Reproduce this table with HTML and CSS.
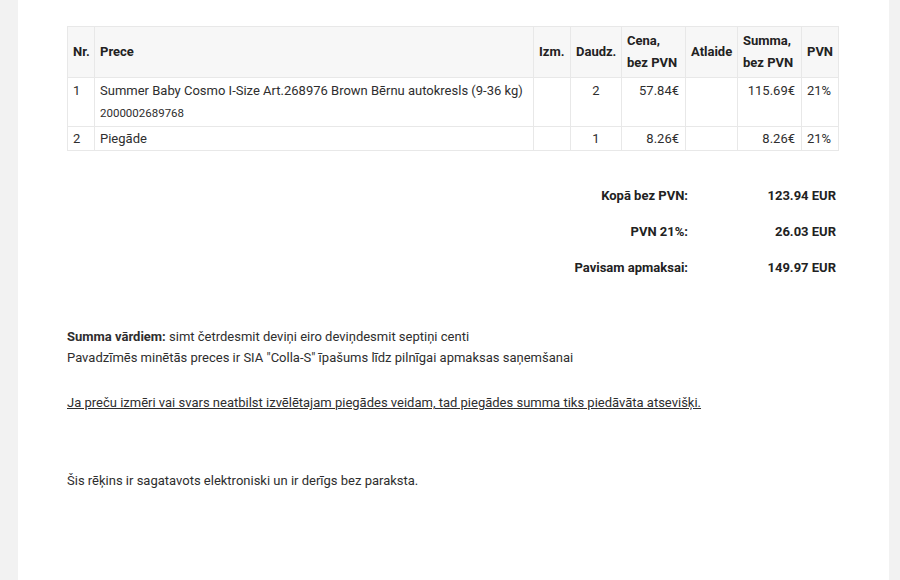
FILE: index.html
```html
<!DOCTYPE html>
<html lang="lv">
<head>
<meta charset="utf-8">
<title>Rēķins</title>
<link rel="stylesheet" href="styles.css">
</head>
<body>
<div class="page">
  <table class="items">
    <colgroup>
      <col class="c-nr"><col class="c-prece"><col class="c-izm"><col class="c-daudz"><col class="c-cena"><col class="c-atl"><col class="c-summa"><col class="c-pvn">
    </colgroup>
    <thead>
      <tr>
        <th>Nr.</th>
        <th>Prece</th>
        <th>Izm.</th>
        <th>Daudz.</th>
        <th>Cena,<br>bez PVN</th>
        <th>Atlaide</th>
        <th>Summa,<br>bez PVN</th>
        <th>PVN</th>
      </tr>
    </thead>
    <tbody>
      <tr class="first">
        <td>1</td>
        <td>Summer Baby Cosmo I-Size Art.268976 Brown Bērnu autokresls (9-36 kg)<br><span class="code">2000002689768</span></td>
        <td></td>
        <td class="center">2</td>
        <td class="right">57.84€</td>
        <td></td>
        <td class="right">115.69€</td>
        <td>21%</td>
      </tr>
      <tr class="last">
        <td>2</td>
        <td>Piegāde</td>
        <td></td>
        <td class="center">1</td>
        <td class="right">8.26€</td>
        <td></td>
        <td class="right">8.26€</td>
        <td>21%</td>
      </tr>
    </tbody>
  </table>

  <div class="totals">
    <div class="t-row"><span class="t-label">Kopā bez PVN:</span><span class="t-value">123.94 EUR</span></div>
    <div class="t-row"><span class="t-label">PVN 21%:</span><span class="t-value">26.03 EUR</span></div>
    <div class="t-row"><span class="t-label">Pavisam apmaksai:</span><span class="t-value">149.97 EUR</span></div>
  </div>

  <div class="notes">
    <p class="line"><b>Summa vārdiem:</b> simt četrdesmit deviņi eiro deviņdesmit septiņi centi</p>
    <p class="line">Pavadzīmēs minētās preces ir SIA "Colla-S" īpašums līdz pilnīgai apmaksas saņemšanai</p>
    <p class="line warn">Ja preču izmēri vai svars neatbilst izvēlētajam piegādes veidam, tad piegādes summa tiks piedāvāta atsevišķi.</p>
    <p class="line final">Šis rēķins ir sagatavots elektroniski un ir derīgs bez paraksta.</p>
  </div>
</div>
</body>
</html>
```

FILE: styles.css
```css
html, body {
  margin: 0;
  padding: 0;
}
body {
  background: #f2f2f2;
  font-family: Roboto, "Liberation Sans", Arial, sans-serif;
  color: #2e2e2e;
  font-size: 13px;
}
.page {
  background: #ffffff;
  margin-left: 18px;
  width: 871px;
  height: 580px;
  box-sizing: border-box;
  padding: 26px 51px 0 49px;
}
.items {
  width: 771px;
  border-collapse: collapse;
  table-layout: fixed;
  font-size: 13px;
}
.c-nr { width: 27px; }
.c-prece { width: 439px; }
.c-izm { width: 37px; }
.c-daudz { width: 51px; }
.c-cena { width: 64px; }
.c-atl { width: 52px; }
.c-summa { width: 64px; }
.c-pvn { width: 37px; }
.items th, .items td {
  border: 1px solid #e8e8e8;
  padding: 1px 5px;
  line-height: 22px;
  text-align: left;
}
.items th {
  background: #f7f7f7;
  font-weight: 700;
  color: #222;
  vertical-align: middle;
  height: 43px;
  padding: 3px 3px 3px 5px;
}
.items td {
  vertical-align: top;
}
.items tr.first td {
  padding-top: 2px;
  padding-bottom: 2px;
}
.items tr.last td {
  padding-bottom: 0;
}
.items td.center { text-align: center; }
.items td.right { text-align: right; padding-right: 6px; }
.code {
  font-size: 11.5px;
}
.totals {
  margin-top: 35px;
  display: flex;
  flex-direction: column;
  gap: 17px;
  font-weight: 700;
  color: #222;
  font-size: 13px;
}
.t-row {
  display: flex;
  justify-content: flex-end;
  line-height: 19px;
}
.t-label {
  text-align: right;
}
.t-value {
  width: 148px;
  text-align: right;
  padding-right: 2px;
}
.notes {
  margin-top: 49px;
  font-size: 13px;
}
.line {
  margin: 0;
  line-height: 21px;
}
.warn {
  margin-top: 24px;
  text-decoration: underline;
}
.final {
  margin-top: 57px;
}
```
